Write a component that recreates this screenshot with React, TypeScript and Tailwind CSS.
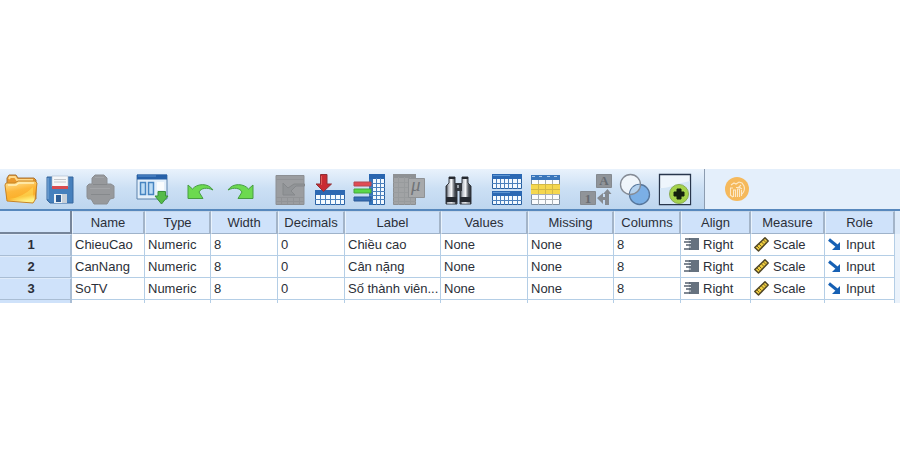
import type { ReactNode } from 'react';

interface Tool {
  label: string;
  icon: ReactNode;
}

interface Variable {
  name: string;
  type: string;
  width: number;
  decimals: number;
  label: string;
  values: string;
  missing: string;
  columns: number;
  align: string;
  measure: string;
  role: string;
}

const variables: Variable[] = [
  { name: 'ChieuCao', type: 'Numeric', width: 8, decimals: 0, label: 'Chiều cao', values: 'None', missing: 'None', columns: 8, align: 'Right', measure: 'Scale', role: 'Input' },
  { name: 'CanNang', type: 'Numeric', width: 8, decimals: 0, label: 'Cân nặng', values: 'None', missing: 'None', columns: 8, align: 'Right', measure: 'Scale', role: 'Input' },
  { name: 'SoTV', type: 'Numeric', width: 8, decimals: 0, label: 'Số thành viên...', values: 'None', missing: 'None', columns: 8, align: 'Right', measure: 'Scale', role: 'Input' },
];

const columns = [
  { title: 'Name', width: 'w-[73px]' },
  { title: 'Type', width: 'w-[66px]' },
  { title: 'Width', width: 'w-[67px]' },
  { title: 'Decimals', width: 'w-[67px]' },
  { title: 'Label', width: 'w-[96px]' },
  { title: 'Values', width: 'w-[87px]' },
  { title: 'Missing', width: 'w-[86px]' },
  { title: 'Columns', width: 'w-[67px]' },
  { title: 'Align', width: 'w-[70px]' },
  { title: 'Measure', width: 'w-[74px]' },
  { title: 'Role', width: 'w-[70px]' },
];

const Icon = ({ children }: { children: ReactNode }) => (
  <svg viewBox="0 0 32 32" className="size-8 overflow-visible" aria-hidden="true">
    {children}
  </svg>
);

const OpenIcon = () => (
  <Icon>
    <defs>
      <linearGradient id="folder" x1="0" y1="0" x2="0.3" y2="1">
        <stop offset="0" stopColor="#ffe9a0" />
        <stop offset="0.5" stopColor="#fdb73a" />
        <stop offset="0.8" stopColor="#fbb02c" />
        <stop offset="1" stopColor="#fff08a" />
      </linearGradient>
    </defs>
    <path d="M1 8V5l2-3h7l2 3h16l2 2v19H1z" fill="#e8982c" stroke="#a8773a" />
    <path d="M3 6l1-2h5l2 3h16" fill="none" stroke="#ffd98a" strokeWidth="2" />
    <path d="M-1 12l1-2h9l3-2h17l2 2-2 17-2 3-26-2z" fill="url(#folder)" stroke="#c88425" />
    <path d="M2 12h8l3-2h15" fill="none" stroke="#fff0b8" strokeWidth="1.5" />
    <path d="M3 26c9-1 17-5 24-12v14z" fill="#fff06a" opacity=".4" />
  </Icon>
);

const SaveIcon = () => (
  <Icon>
    <path d="M1 4h26v26H4l-3-3z" fill="#4680bd" stroke="#37679d" />
    <path d="M6 3h16v11H6z" fill="#f5f7f9" stroke="#a9b9cb" strokeWidth=".6" />
    <path d="M8 6.500h12M8 9h12" stroke="#c3c6ca" />
    <path d="M6 13h16v3H6z" fill="#d74b50" />
    <path d="M8 21h13v9H8z" fill="#edf1f5" />
    <path d="M10 22h5v7h-5z" fill="#2d5c95" />
    <path d="M16 21h5v9h-5z" fill="#c7d0da" />
    <path d="M2 5v21" stroke="#80addb" />
  </Icon>
);

const PrintIcon = () => (
  <Icon>
    <path
      d="M6 11V5l3-3h9l3 3v6h4l3 2v12l-4 1-3 5H8l-3-5H2l-1-2V13l2-2z"
      fill="#97999c"
      stroke="#8b8e92"
      strokeLinejoin="round"
    />
    <path d="M7 11.500h14M5 21.500h19" stroke="#86898c" />
    <path d="M9 4.500h9M4 15.500h20" stroke="#a3a5a8" />
  </Icon>
);

const RecallIcon = () => (
  <Icon>
    <path d="M2 2h30v24H2z" fill="#e3effa" stroke="#5b81ab" />
    <path d="M2 1.500h30v5H2z" fill="#2660a8" />
    <path d="M3 3h18" stroke="#5b91cf" />
    <path d="M5.500 9.500h5v12h-5zM13.500 9.500h5v12h-5z" fill="#bcdcf5" stroke="#4785c1" strokeWidth="1.5" />
    <path d="M22 9h7v8h-7z" fill="#fafcfd" />
    <path d="M23 18.500h7.500V23H33l-6.500 8L20 23h3z" fill="#56bb49" stroke="#3b913b" strokeLinejoin="round" />
  </Icon>
);

const undoPath = 'M4 12l4.500 4C13 10.500 24 9.500 29 17c-6-3-12-2-14 2l4 6.500H4z';

const UndoIcon = () => (
  <Icon>
    <path d={undoPath} fill="#6cda50" stroke="#479d43" strokeLinejoin="round" />
  </Icon>
);

const RedoIcon = () => (
  <Icon>
    <path d={undoPath} transform="translate(33 0) scale(-1 1)" fill="#6cda50" stroke="#479d43" strokeLinejoin="round" />
  </Icon>
);

const GoToCaseIcon = () => (
  <Icon>
    <path d="M3 2.500h28v29H3z" fill="#9b9da0" stroke="#8c8f93" />
    <path d="M3 6.500h28M3 24.500h28M3 28.500h28M8.500 24v7M14.500 24v7M20.500 24v7M26.500 24v7" stroke="#919396" />
    <path d="M10 10v12h12l-4-4 5-5h8.500v-2H21l-6 4z" fill="#919497" stroke="#85888b" />
  </Icon>
);

const GoToVariableIcon = () => (
  <Icon>
    <path d="M2.500 17.500h29v14h-29z" fill="#f4faff" stroke="#2b62a5" />
    <path d="M2 17h30v5H2z" fill="#2c68b2" />
    <path d="M2 26.500h30M7.500 22v10M12.500 22v10M17.500 22v10M22.500 22v10M27.500 22v10" stroke="#4b82be" />
    <path d="M7.500 1.500h6.500V11h4.500L10.500 18.500 3 11h4.500z" fill="#c92c32" stroke="#8f3037" strokeLinejoin="round" />
    <path d="M8.500 3v9" stroke="#e35c58" />
  </Icon>
);

const VariablesIcon = () => (
  <Icon>
    <path d="M16.500 1.500h15v30h-15z" fill="#f3f9ff" stroke="#285f9f" />
    <path d="M16 1h16v5H16z" fill="#2965af" />
    <path d="M16 6h4v26h-4z" fill="#3372b8" />
    <path d="M16 10.500h16M16 14.500h16M16 18.500h16M16 22.500h16M16 26.500h16M23.500 5v27M27.500 5v27" stroke="#4b80bc" />
    <path d="M1 9h17v4H1z" fill="#e04b54" stroke="#b44851" />
    <path d="M1 16h17v4H1z" fill="#59d848" stroke="#46a53e" />
    <path d="M1 24h17v4H1z" fill="#376fb5" stroke="#2b5995" />
  </Icon>
);

const DescriptivesIcon = () => (
  <Icon>
    <path d="M.5 1.500h22v30H.5z" fill="#a1a3a5" stroke="#8c8f92" />
    <path d="M0 1h23v4H0z" fill="#8e9194" />
    <path d="M0 9.500h23M0 14.500h23M0 19.500h23M0 24.500h23M0 28.500h23M5.500 4v28M11.500 4v28M17.500 4v28" stroke="#989b9d" />
    <path d="M15.500 5.500h16v19h-16z" fill="#a7a9ab" stroke="#8f9295" />
    <text x="18" y="18" fontSize="19" fontStyle="italic" fill="#717478" fontFamily="Liberation Serif, serif">
      μ
    </text>
  </Icon>
);

const FindIcon = () => (
  <Icon>
    <defs>
      <linearGradient id="barrel">
        <stop offset="0" stopColor="#23272d" />
        <stop offset="0.25" stopColor="#c1c6ce" />
        <stop offset="0.5" stopColor="#f4f5f7" />
        <stop offset="0.75" stopColor="#5b6068" />
        <stop offset="1" stopColor="#202329" />
      </linearGradient>
    </defs>
    <path d="M7 4h6v6l2 3v18H4V13l3-3z" fill="url(#barrel)" stroke="#373b42" strokeLinejoin="round" />
    <path d="M20 4h6v6l3 3v18H18V13l2-3z" fill="url(#barrel)" stroke="#373b42" strokeLinejoin="round" />
    <path d="M13 10h7v8h-7z" fill="#33373e" />
    <path d="M15 12h2v3h-2z" fill="#9da3ab" />
    <path d="M7 4h6v2H7zM20 4h6v2h-6zM4 24h11v5H4zM18 24h11v5H18z" fill="#252930" />
    <path d="M5 30h8M20 30h8" stroke="#d2d5d9" />
  </Icon>
);

const SplitFileIcon = () => (
  <Icon>
    <path d="M1.500 1.500h29v14h-29zM1.500 18.500h29v13h-29z" fill="#f3f9ff" stroke="#285f9f" />
    <path d="M1 1h30v5H1zM1 18h30v5H1z" fill="#2b68b3" />
    <path d="M2 2.500h17M2 19.500h17" stroke="#5e96d2" />
    <path d="M1 10.500h30M1 27.500h30M5.500 6v10M9.500 6v10M13.500 6v10M17.500 6v10M21.500 6v10M26.500 6v10M5.500 23v9M9.500 23v9M13.500 23v9M17.500 23v9M21.500 23v9M26.500 23v9" stroke="#4b80bc" />
  </Icon>
);

const SelectCasesIcon = () => (
  <Icon>
    <path d="M.5 2.500h28v29H.5z" fill="#fbfcfd" stroke="#7b8ea2" />
    <path d="M0 2h29v5H0z" fill="#3976bb" />
    <path d="M1 3.500h3M8 3.500h3M16 3.500h3M23 3.500h3" stroke="#a9c8e8" />
    <path d="M0 12h29v9H0z" fill="#f5d74f" />
    <path d="M0 21.500h29M0 26.500h29M7.500 7v5M14.500 7v5M21.500 7v5M7.500 21v11M14.500 21v11M21.500 21v11" stroke="#a8afb5" />
    <path d="M0 11.500h29M0 16.500h29M7.500 12v9M14.500 12v9M21.500 12v9" stroke="#d2b846" />
  </Icon>
);

const ValueLabelsIcon = () => (
  <Icon>
    <path d="M16.500 1.500h15v13h-15zM.5 18.500h15v13H.5z" fill="#909499" stroke="#858a90" />
    <g fill="#666b71" fontFamily="Liberation Serif, serif" fontWeight="bold" fontSize="13" textAnchor="middle">
      <text x="24" y="12">A</text>
      <text x="8" y="30">1</text>
    </g>
    <path d="M27.500 16l4 5h-2.500v11h-4v-5h-2v4l-6-6 6-5v4h2v-3h-2z" fill="#858a90" />
  </Icon>
);

const UseSetsIcon = () => (
  <Icon>
    <circle cx="10.500" cy="11.500" r="10" fill="#f4f8fc" fillOpacity=".85" />
    <circle cx="19.500" cy="21.500" r="10" fill="#6da7e3" fillOpacity=".85" stroke="#57769b" strokeWidth="1.300" />
    <path d="M10 21.500a10 10 0 0 0 10.500-10 10 10 0 0 0-10.500 10z" fill="#b5d2ee" />
    <circle cx="10.500" cy="11.500" r="10" fill="none" stroke="#858b95" strokeWidth="1.300" />
  </Icon>
);

const ShowAllIcon = () => (
  <Icon>
    <path d="M-.5 1.500h31v30h-31z" fill="#eef5fc" stroke="#28364c" strokeWidth="1.300" />
    <path d="M0 15c8 0 13-2 17-4l13-3v23H0z" fill="#d5e6f6" />
    <circle cx="19" cy="21" r="9.500" fill="#a5d34c" stroke="#8aab53" />
    <path d="M17 16h4v3h3v4h-3v3h-4v-3h-3v-4h3z" fill="#15200f" stroke="#15200f" strokeLinejoin="round" />
  </Icon>
);

const SpellIcon = () => (
  <svg viewBox="0 0 24 24" className="size-6" aria-hidden="true">
    <circle cx="12" cy="12" r="12" fill="#f5b95c" />
    <g fill="none" stroke="#fde9c8" strokeWidth="1.100">
      <path d="M5.500 11v7M5 18l3 2M8.500 20v-7h2v7M12.500 20v-8h2v8M16.500 19v-6M5 11h3M11 10.500h4" />
      <path d="M6 8l3-2 2 1 3-2 3 1 2 3c1 3 0 6-2 8M16 8l-2 2 3 2" />
    </g>
  </svg>
);

const toolGroups: Tool[][] = [
  [
    { label: 'Open', icon: <OpenIcon /> },
    { label: 'Save', icon: <SaveIcon /> },
    { label: 'Print', icon: <PrintIcon /> },
  ],
  [{ label: 'Recall dialogs', icon: <RecallIcon /> }],
  [
    { label: 'Undo', icon: <UndoIcon /> },
    { label: 'Redo', icon: <RedoIcon /> },
  ],
  [
    { label: 'Go to case', icon: <GoToCaseIcon /> },
    { label: 'Go to variable', icon: <GoToVariableIcon /> },
    { label: 'Variables', icon: <VariablesIcon /> },
    { label: 'Descriptive statistics', icon: <DescriptivesIcon /> },
  ],
  [{ label: 'Find', icon: <FindIcon /> }],
  [
    { label: 'Split file', icon: <SplitFileIcon /> },
    { label: 'Select cases', icon: <SelectCasesIcon /> },
  ],
  [
    { label: 'Value labels', icon: <ValueLabelsIcon /> },
    { label: 'Use variable sets', icon: <UseSetsIcon /> },
    { label: 'Show all variables', icon: <ShowAllIcon /> },
  ],
];

const AlignRightIcon = () => (
  <svg viewBox="0 0 15 13" className="h-[13px] w-[15px] shrink-0" aria-hidden="true">
    <path d="M5 0h10v12H5z" fill="#66727f" />
    <path d="M1 1h5M0 4h5M2 7h3M0 11h6" stroke="#566270" strokeWidth="1.500" />
    <path d="M4 2.500h3M5 5.500h2M4 9h3" stroke="#dfe5ea" />
  </svg>
);

const ScaleIcon = () => (
  <svg viewBox="0 0 15 15" className="size-[15px] shrink-0" aria-hidden="true">
    <path d="M.8 10.500L11 .8l3.200 3.200L4.500 14z" fill="#f0cf42" stroke="#4f4526" strokeWidth="1.500" strokeLinejoin="round" />
    <path d="M3 9l2.500 2.500M5 7l2.500 2.500M7.500 5L10 7.500M9.500 3L12 5.500" stroke="#77621f" />
  </svg>
);

const InputIcon = () => (
  <svg viewBox="0 0 13 13" className="size-[13px] shrink-0" aria-hidden="true">
    <path d="M1 1.500l8 6.500" stroke="#1660b4" strokeWidth="3" />
    <path d="M12 4v8H4z" fill="#1660b4" />
  </svg>
);

const Toolbar = () => (
  <div role="toolbar" className="flex h-[42px] border-b-2 border-[#5788bd] bg-linear-to-b from-[#e9f2fc] via-[#cbdff4] to-[#bed6ef]">
    <div className="flex items-center gap-[17px] pr-3 pl-[6px]">
      {toolGroups.map((group, i) => (
        <div key={i} className="flex gap-2">
          {group.map(tool => (
            <button key={tool.label} type="button" aria-label={tool.label} className="size-8">
              {tool.icon}
            </button>
          ))}
        </div>
      ))}
    </div>
    <div className="flex flex-1 items-center border-l border-[#8c9cb0] bg-[#e4effb] pl-5">
      <button type="button" aria-label="Spell check">
        <SpellIcon />
      </button>
    </div>
  </div>
);

const cell = 'h-[22px] overflow-hidden border-r border-b border-[#b4cee6] py-0 pl-[3px] text-left whitespace-nowrap';
const rowHead = 'border-y border-r-2 border-t-[#dfebfa] border-r-[#a9bdd4] border-b-[#a9bdd4] bg-[#cfe2fa] p-0 pr-2 text-center font-bold';

const VariableRow = ({ variable, index }: { variable: Variable; index: number }) => (
  <tr>
    <th scope="row" className={rowHead}>{index + 1}</th>
    <td className={cell}>{variable.name}</td>
    <td className={cell}>{variable.type}</td>
    <td className={cell}>{variable.width}</td>
    <td className={cell}>{variable.decimals}</td>
    <td className={cell}>{variable.label}</td>
    <td className={cell}>{variable.values}</td>
    <td className={cell}>{variable.missing}</td>
    <td className={cell}>{variable.columns}</td>
    <td className={cell}>
      <div className="flex items-center gap-1">
        <AlignRightIcon />
        {variable.align}
      </div>
    </td>
    <td className={cell}>
      <div className="flex items-center gap-1">
        <ScaleIcon />
        {variable.measure}
      </div>
    </td>
    <td className={cell}>
      <div className="flex items-center gap-[5px]">
        <InputIcon />
        {variable.role}
      </div>
    </td>
    <td className="bg-[#eaf2fb] p-0" />
  </tr>
);

const VariableTable = () => (
  <table className="w-full table-fixed border-separate border-spacing-0 text-[13px] leading-5 text-[#2b2f38]">
    <colgroup>
      <col className="w-[72px]" />
      {columns.map(column => (
        <col key={column.title} className={column.width} />
      ))}
      <col className="w-[5px]" />
    </colgroup>
    <thead>
      <tr>
        <td className="h-[23px] border-r-2 border-b-2 border-[#76859a] bg-[#d3e5fb] p-0" />
        {columns.map(column => (
          <th
            key={column.title}
            scope="col"
            className="h-[23px] border border-r-2 border-t-[#c5d6ea] border-r-[#a3b4c8] border-b-[#9fb3ca] border-l-[#e9f3fd] bg-[#cfe2fa] p-0 pt-px text-center font-normal"
          >
            {column.title}
          </th>
        ))}
        <td className="bg-[#dceafa] p-0" />
      </tr>
    </thead>
    <tbody>
      {variables.map((variable, i) => (
        <VariableRow key={variable.name} variable={variable} index={i} />
      ))}
      <tr>
        <td className="h-[3px] border-r-2 border-[#a9bdd4] bg-[#cfe2fa] p-0" />
        {columns.map(column => (
          <td key={column.title} className="h-[3px] border-r border-[#b4cee6] p-0" />
        ))}
        <td className="bg-[#eaf2fb] p-0" />
      </tr>
    </tbody>
  </table>
);

const App = () => {
  return (
    <main className="flex min-h-screen flex-col justify-center bg-white font-['Liberation_Sans',Arial,sans-serif]">
      <Toolbar />
      <VariableTable />
    </main>
  );
};

export default App;
